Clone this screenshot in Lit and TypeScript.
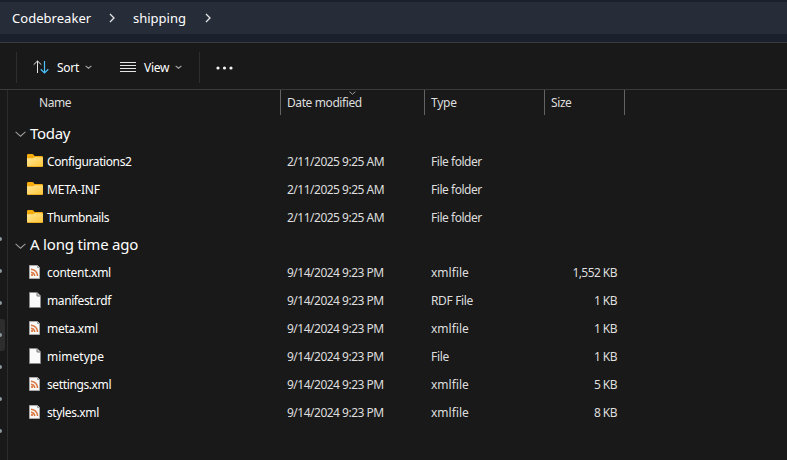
import { LitElement, html, css, svg } from "lit";
import { customElement } from "lit/decorators.js";

type Kind = "folder" | "xml" | "file";
interface Entry { name: string; date: string; type: string; size: string; kind: Kind }

const D1 = "2/11/2025 9:25 AM";
const D2 = "9/14/2024 9:23 PM";
const groups: { title: string; cls: string; items: Entry[] }[] = [
  { title: "Today", cls: "today", items: [
    { name: "Configurations2", date: D1, type: "File folder", size: "", kind: "folder" },
    { name: "META-INF", date: D1, type: "File folder", size: "", kind: "folder" },
    { name: "Thumbnails", date: D1, type: "File folder", size: "", kind: "folder" },
  ] },
  { title: "A long time ago", cls: "older", items: [
    { name: "content.xml", date: D2, type: "xmlfile", size: "1,552 KB", kind: "xml" },
    { name: "manifest.rdf", date: D2, type: "RDF File", size: "1 KB", kind: "file" },
    { name: "meta.xml", date: D2, type: "xmlfile", size: "1 KB", kind: "xml" },
    { name: "mimetype", date: D2, type: "File", size: "1 KB", kind: "file" },
    { name: "settings.xml", date: D2, type: "xmlfile", size: "5 KB", kind: "xml" },
    { name: "styles.xml", date: D2, type: "xmlfile", size: "8 KB", kind: "xml" },
  ] },
];

// Letter spacing in px for each label of the list.
const tracking: Record<string, number> = {
  "Configurations2": -0.4, "META-INF": -0.2, "Thumbnails": -0.42,
  "content.xml": -0.3, "manifest.rdf": -0.4, "meta.xml": -0.28, "mimetype": 0,
  "settings.xml": -0.38, "styles.xml": -0.38,
  "File folder": -0.46, "RDF File": -0.35, "File": -0.3, "xmlfile": 0,
  "Name": -0.45, "Date modified": -0.4, "Type": -0.25, "Size": -0.4,
};
const label = (text: string) => html`<span style="letter-spacing:${tracking[text] ?? 0}px">${text}</span>`;

const folderIcon = html`<svg class="icon" width="16" height="16" viewBox="0 0 16 16">
  <defs><linearGradient id="g" x1="0" y1="0" x2="1" y2="1"><stop offset="0" stop-color="#ffe69a"/><stop offset="1" stop-color="#ffc636"/></linearGradient></defs>
  <path d="M0 2.2Q0 1 1.2 1H5.3Q6 1 6.5 1.6L7.5 3H14.8Q16 3 16 4.2V8H0Z" fill="#f5ac0c"/>
  <path d="M0 5.2H5.5Q6.4 5.2 7 4.7L7.6 4.2H15Q16 4.2 16 5.2V12.8Q16 14 14.8 14H1.2Q0 14 0 12.8Z" fill="url(#g)"/>
  <path d="M.6 13.5H15.4" stroke="#e8a51c" stroke-width=".8"/>
</svg>`;
const fileIcon = html`<svg class="icon" width="16" height="16" viewBox="0 0 16 16">
  <path d="M2.5 .5H10L13.5 4V15.5H2.5Z" fill="#fafafa" stroke="#8b8b8b"/>
  <path d="M10 .5V4H13.5" fill="#d5d5d5" stroke="#777"/>
</svg>`;
const xmlIcon = html`<svg class="icon" width="16" height="16" viewBox="0 0 16 16">
  <path d="M2.5 1.5H10.5L12.5 3.5V14.5H2.5Z" fill="#f7f7f7" stroke="#a9a9a9"/>
  <path d="M10.5 1.5V3.5H12.5" fill="#ddd" stroke="#888" stroke-width=".8"/>
  <circle cx="5" cy="11" r="1.1" fill="#d86a2c"/>
  <path d="M4 8.2Q7.4 8.6 7.8 12M4 5.3Q10 5.9 10.6 12" fill="none" stroke="#d9763e" stroke-width="1.5"/>
</svg>`;
const icons = { folder: folderIcon, xml: xmlIcon, file: fileIcon };

const chevron = (cls: string, w: number, h: number) => html`<svg class=${cls} width=${w} height=${h} viewBox="0 0 ${w} ${h}">
  ${svg`<path d="M.6 .8L${w / 2} ${h - 0.8}L${w - 0.6} .8"/>`}</svg>`;
const crumbArrow = html`<svg class="crumb-arrow" width="6" height="10" viewBox="0 0 6 10"><path d="M1 1L5 5L1 9"/></svg>`;

@customElement("app-root")
export class AppRoot extends LitElement {
  static styles = css`
    :host { display: block; width: 787px; height: 460px; overflow: hidden; background: #191919; color: #fff;
      font: 12px/16px "Noto Sans", "Open Sans", sans-serif; }
    * { box-sizing: border-box; }
    svg { display: block; flex: none; fill: none; }
    span { white-space: nowrap; }
    .address { height: 43px; background: #1a202c; border-bottom: 1px solid #3b3b3b; padding: 2px 0 7px; }
    .crumbs { height: 32px; display: flex; align-items: center; background: #272d38; padding-left: 12px; font-size: 13px; }
    .crumb { display: block; }
    .crumb.parent { width: 97px; letter-spacing: .04px; }
    .crumb.current { width: 72px; letter-spacing: 0; }
    .crumb-arrow { stroke: #e4e5e7; stroke-width: 1.3; }
    .crumb-arrow + .current { margin-left: 18px; }
    .toolbar { height: 47px; display: flex; align-items: center; border-bottom: 1px solid #3b3b3b; padding: 2px 0 0 16px; }
    .divider { width: 1px; height: 31px; background: #2e2e2e; }
    .tool { display: flex; align-items: center; height: 32px; }
    .tool span { padding-top: 2px; letter-spacing: -.3px; margin-left: 8px; }
    .sort { margin-left: 16px; width: 87px; }
    .sort span { width: 28px; }
    .view span { width: 31px; }
    .view { width: 79px; }
    .small { stroke: #aaa; stroke-width: 1.1; }
    .more { margin-left: 16px; margin-top: 1px; }
    .body { display: flex; height: 370px; }
    .nav { width: 8px; border-right: 1px solid #2c2c2c; padding-top: 133px; }
    .nav-item { width: 5px; height: 32px; display: flex; align-items: center; }
    .nav-item::before { content: ""; width: 2px; height: 4px; border-radius: 0 2px 2px 0; background: #8c979e; }
    .nav-item.selected { background: #2d2d2d; border-radius: 0 3px 3px 0; }
    .list { flex: 1; }
    .columns, .row { display: grid; grid-template-columns: 273px 144px 120px 80px; }
    .columns { height: 25px; margin-bottom: 5px; color: #dedede; }
    .columns > div { position: relative; border-right: 1px solid #636363; display: flex; align-items: center; padding-left: 6px; }
    .columns > div:first-child { padding-left: 31px; }
    .mark { position: absolute; top: 1px; left: 68px; stroke: #969696; }
    .group { display: flex; align-items: center; height: 28px; padding-left: 7px; font-size: 15px; line-height: 20px; }
    .group.older { height: 27px; }
    .group span { margin-left: 4px; padding-bottom: 2px; letter-spacing: -.3px; }
    .group.older span { padding-bottom: 3px; letter-spacing: -.2px; }
    .toggle { stroke: #9b9b9b; stroke-width: 1.1; }
    .row { height: 28px; align-items: center; color: #dedede; }
    .name { display: flex; align-items: center; padding-left: 19px; color: #fff; }
    .name span { margin-left: 4px; }
    .icon { margin-top: -2px; }
    .cell { padding-left: 6px; }
    .date { letter-spacing: -.5px; }
    .size { text-align: right; padding-right: 8px; letter-spacing: -.55px; }
  `;

  render() {
    return html`
      <div class="address"><div class="crumbs">
        <span class="crumb parent">Codebreaker</span>${crumbArrow}
        <span class="crumb current">shipping</span>${crumbArrow}
      </div></div>
      <div class="toolbar">
        <div class="divider"></div>
        <div class="tool sort">
          <svg width="16" height="14" viewBox="0 0 16 14"><path d="M4.5 13V1M.7 4.7L4.5 1L8.3 4.7" stroke="#e4e4e4"/><path d="M11.5 1V13M7.7 9.3L11.5 13L15.3 9.3" stroke="#4cc2ff" stroke-width="1.2"/></svg>
          <span>Sort</span>${chevron("small", 7, 4)}
        </div>
        <div class="tool view">
          <svg width="16" height="12" viewBox="0 0 16 12"><path d="M0 1.5H16M0 4.5H16M0 7.5H16M0 10.5H16" stroke="#e4e4e4"/></svg>
          <span>View</span>${chevron("small", 7, 4)}
        </div>
        <div class="divider"></div>
        <svg class="more" width="17" height="4" viewBox="0 0 17 4"><g fill="#f4f4f4"><circle cx="2" cy="2" r="1.6"/><circle cx="8.5" cy="2" r="1.6"/><circle cx="15" cy="2" r="1.6"/></g></svg>
      </div>
      <div class="body">
        <div class="nav">${[0, 1, 2, 3, 4, 5, 6].map((i) => html`<div class="nav-item ${i === 3 ? "selected" : ""}"></div>`)}</div>
        <div class="list">
          <div class="columns">
            <div>${label("Name")}</div>
            <div>${label("Date modified")}${chevron("mark", 7, 4)}</div>
            <div>${label("Type")}</div>
            <div>${label("Size")}</div>
          </div>
          ${groups.map((g) => html`
            <div class="group ${g.cls}">${chevron("toggle", 11, 6)}<span>${g.title}</span></div>
            ${g.items.map((f) => html`<div class="row">
              <div class="name">${icons[f.kind]}${label(f.name)}</div>
              <div class="cell date">${f.date}</div><div class="cell">${label(f.type)}</div><div class="size">${f.size}</div>
            </div>`)}`)}
        </div>
      </div>`;
  }
}
